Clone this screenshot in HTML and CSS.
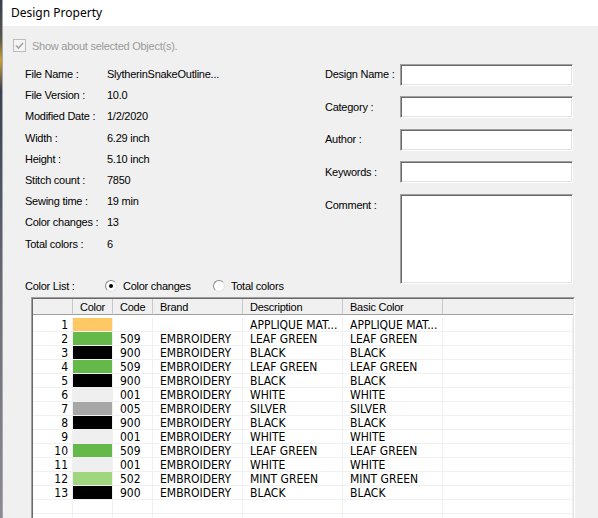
FILE: index.html
```html
<!DOCTYPE html>
<html>
<head>
  <meta charset="utf-8">
  <title>Design Property</title>
  <link rel="stylesheet" href="styles.css">
</head>
<body>
  <div class="window">
    <div class="backdrop"></div>

    <div class="dialog">
      <div class="titlebar">Design Property</div>

      <div class="content">
        <!-- disabled option -->
        <div class="check-row">
          <span class="checkbox">
            <svg width="11" height="11" viewBox="0 0 11 11"><path d="M2 5.5 L4.5 8 L9 3" fill="none" stroke="#a3a3a3" stroke-width="1.6"/></svg>
          </span>
          Show about selected Object(s).
        </div>

        <div class="props">
          <div class="info-col">
            <dl class="info">
              <dt>File Name :</dt><dd>SlytherinSnakeOutline...</dd>
              <dt>File Version :</dt><dd>10.0</dd>
              <dt>Modified Date :</dt><dd>1/2/2020</dd>
              <dt>Width :</dt><dd>6.29 inch</dd>
              <dt>Height :</dt><dd>5.10 inch</dd>
              <dt>Stitch count :</dt><dd>7850</dd>
              <dt>Sewing time :</dt><dd>19 min</dd>
              <dt>Color changes :</dt><dd>13</dd>
              <dt>Total colors :</dt><dd>6</dd>
            </dl>

            <div class="color-list">
              <span class="color-list-label">Color List :</span>
              <span class="option first"><span class="radio checked"></span>Color changes</span>
              <span class="option"><span class="radio"></span>Total colors</span>
            </div>
          </div>

          <div class="meta">
            <span class="meta-label">Design Name :</span><input class="field" type="text">
            <span class="meta-label">Category :</span><input class="field" type="text">
            <span class="meta-label">Author :</span><input class="field" type="text">
            <span class="meta-label">Keywords :</span><input class="field" type="text">
            <span class="meta-label top">Comment :</span><textarea class="field comment"></textarea>
          </div>
        </div>

        <!-- color list grid -->
        <div class="grid-frame">
          <div class="grid">
            <div class="row head">
              <span></span><span>Color</span><span>Code</span><span>Brand</span><span>Description</span><span>Basic Color</span><span></span>
            </div>
            <div class="grid-body">
              <div class="row"><span class="num">1</span><span class="swatch orange"></span><span></span><span></span><span>APPLIQUE MAT...</span><span>APPLIQUE MAT...</span><span></span></div>
              <div class="row"><span class="num">2</span><span class="swatch green"></span><span>509</span><span>EMBROIDERY</span><span>LEAF GREEN</span><span>LEAF GREEN</span><span></span></div>
              <div class="row"><span class="num">3</span><span class="swatch black"></span><span>900</span><span>EMBROIDERY</span><span>BLACK</span><span>BLACK</span><span></span></div>
              <div class="row"><span class="num">4</span><span class="swatch green"></span><span>509</span><span>EMBROIDERY</span><span>LEAF GREEN</span><span>LEAF GREEN</span><span></span></div>
              <div class="row"><span class="num">5</span><span class="swatch black"></span><span>900</span><span>EMBROIDERY</span><span>BLACK</span><span>BLACK</span><span></span></div>
              <div class="row"><span class="num">6</span><span class="swatch white"></span><span>001</span><span>EMBROIDERY</span><span>WHITE</span><span>WHITE</span><span></span></div>
              <div class="row"><span class="num">7</span><span class="swatch silver"></span><span>005</span><span>EMBROIDERY</span><span>SILVER</span><span>SILVER</span><span></span></div>
              <div class="row"><span class="num">8</span><span class="swatch black"></span><span>900</span><span>EMBROIDERY</span><span>BLACK</span><span>BLACK</span><span></span></div>
              <div class="row"><span class="num">9</span><span class="swatch white"></span><span>001</span><span>EMBROIDERY</span><span>WHITE</span><span>WHITE</span><span></span></div>
              <div class="row"><span class="num">10</span><span class="swatch green"></span><span>509</span><span>EMBROIDERY</span><span>LEAF GREEN</span><span>LEAF GREEN</span><span></span></div>
              <div class="row"><span class="num">11</span><span class="swatch white"></span><span>001</span><span>EMBROIDERY</span><span>WHITE</span><span>WHITE</span><span></span></div>
              <div class="row"><span class="num">12</span><span class="swatch mint"></span><span>502</span><span>EMBROIDERY</span><span>MINT GREEN</span><span>MINT GREEN</span><span></span></div>
              <div class="row"><span class="num">13</span><span class="swatch black"></span><span>900</span><span>EMBROIDERY</span><span>BLACK</span><span>BLACK</span><span></span></div>
              <div class="row"><span></span><span></span><span></span><span></span><span></span><span></span><span></span></div>
              <div class="row"><span></span><span></span><span></span><span></span><span></span><span></span><span></span></div>
            </div>
          </div>
        </div>
      </div>
    </div>
  </div>
</body>
</html>
```

FILE: styles.css
```css
html, body {
  margin: 0;
  padding: 0;
}

body {
  width: 598px;
  height: 518px;
  overflow: hidden;
  background-color: #f0f0f0;
  font-family: "Liberation Sans", Arial, sans-serif;
  font-size: 11px;
  letter-spacing: -0.25px;
  color: #000;
}

.window {
  display: flex;
  height: 518px;
}

/* bit of the app behind the dialog */
.backdrop {
  width: 2px;
  background: linear-gradient(#3a3d52 0, #5b5a4a 40px, #c9a13a 60px, #3b3f55 90px, #6b6d7a 300px, #8a8b93 518px);
}

.dialog {
  flex: 1;
  border-left: 1px solid #a6a6a6;
  background-color: #f0f0f0;
}

.titlebar {
  height: 26px;
  line-height: 25px;
  padding-left: 8px;
  background-color: #fff;
  font-family: "Noto Sans", "Open Sans", sans-serif;
  font-size: 12px;
  letter-spacing: 0;
}

.content {
  padding-left: 22px;
}

.check-row {
  display: flex;
  align-items: center;
  height: 13px;
  margin-top: 13px;
  margin-left: -12px;
  color: #9a9a9a;
}

.checkbox {
  display: flex;
  align-items: center;
  justify-content: center;
  box-sizing: border-box;
  width: 13px;
  height: 13px;
  margin-right: 6px;
  border: 1px solid #bcbcbc;
  background-color: #f4f4f4;
}

.props {
  display: flex;
  margin-top: 11.5px;
}

.info-col {
  width: 300px;
}

.info {
  display: grid;
  grid-template-columns: 82px auto;
  grid-auto-rows: 21.2px;
  align-items: center;
  margin: 0;
}

.info dt,
.info dd {
  margin: 0;
  white-space: nowrap;
}

.color-list {
  display: flex;
  align-items: center;
  height: 14px;
  margin-top: 25px;
}

.color-list-label {
  width: 80px;
}

.option {
  display: flex;
  align-items: center;
}

.option.first {
  width: 108px;
}

.radio {
  position: relative;
  box-sizing: border-box;
  width: 12px;
  height: 12px;
  margin-right: 6px;
  border: 1px solid;
  border-color: #8a8a8a #e3e3e3 #e3e3e3 #8a8a8a;
  border-radius: 50%;
  background-color: #fff;
}

.radio.checked::after {
  content: "";
  position: absolute;
  left: 3px;
  top: 3px;
  width: 4px;
  height: 4px;
  border-radius: 50%;
  background-color: #000;
}

.meta {
  display: grid;
  grid-template-columns: 75px 173px;
  grid-auto-rows: 22px;
  row-gap: 10.5px;
  align-items: center;
}

.meta-label {
  white-space: nowrap;
  margin-top: -1px;
}

.meta-label.top {
  align-self: start;
  margin-top: 5px;
}

.field {
  box-sizing: border-box;
  width: 173px;
  height: 22px;
  margin: 0;
  padding: 0;
  border: 1px solid;
  border-color: #a0a0a0 #fff #fff #a0a0a0;
  box-shadow: inset 1px 1px #696969, inset -1px -1px #e3e3e3;
  background-color: #fff;
  outline: none;
  resize: none;
}

.field.comment {
  grid-row: span 3;
  height: 90px;
  align-self: start;
}

.grid-frame {
  width: 544px;
  margin: 4px 0 0 6px;
  border-top: 1px solid #a0a0a0;
  border-left: 1px solid #a0a0a0;
  border-right: 1px solid #fff;
  box-sizing: border-box;
}

.grid {
  border-top: 1px solid #696969;
  border-left: 1px solid #696969;
  border-right: 1px solid #e3e3e3;
  background-color: #fff;
  height: 240px;
}

.row {
  display: grid;
  grid-template-columns: 40px 40px 40px 90px 100px 100px 1fr;
  height: 14px;
}

.row span {
  box-sizing: border-box;
  padding-left: 7px;
  border-right: 1px solid #f0f0f0;
  border-bottom: 1px solid #f0f0f0;
  line-height: 13px;
  white-space: nowrap;
  overflow: hidden;
}

.grid-body {
  padding-top: 3px;
}

.grid-body .row span {
  font-family: "DejaVu Sans Condensed", "Liberation Sans", sans-serif;
  font-size: 12px;
  line-height: 14px;
  letter-spacing: 0;
}

.row.head {
  height: 16px;
}

.row.head span {
  line-height: 16px;
  background-color: #f0f0f0;
  border-right: 1px solid #c8c8c8;
  border-bottom: 1px solid #a0a0a0;
}

.row.head span:last-child {
  border-right: none;
}

.row .num {
  padding-left: 0;
  padding-right: 4px;
  text-align: right;
}

.swatch.orange { background-color: #ffc864; }
.swatch.green { background-color: #64b94a; }
.swatch.black { background-color: #000; }
.swatch.white { background-color: #efefef; }
.swatch.silver { background-color: #a7a7a7; }
.swatch.mint { background-color: #a0d77e; }
```
